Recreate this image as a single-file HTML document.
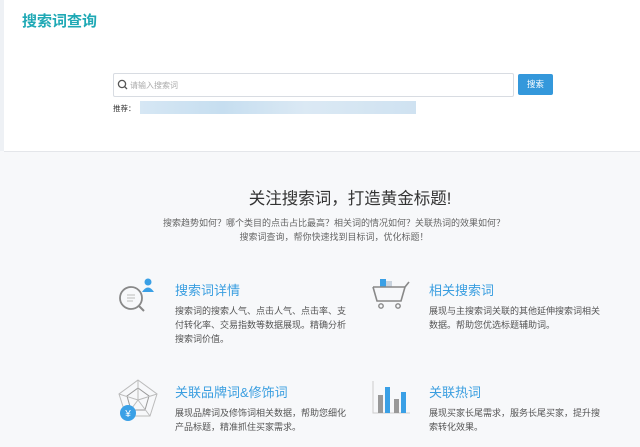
<!DOCTYPE html><html><head><meta charset="utf-8"><style>
body{margin:0;width:640px;height:447px;overflow:hidden;background:#f7f8fa;font-family:"Liberation Sans","Noto Sans CJK SC",sans-serif;position:relative}
.a{position:absolute;white-space:nowrap}
.top{position:absolute;left:4px;top:0;width:636px;height:151px;background:#fff;border-bottom:1px solid #e4e6ea}
.strip{position:absolute;left:0;top:0;width:4px;height:151px;background:#eef1f5}
.t{color:#3a9ee0;font-size:13px}
.d{color:#555;font-size:9px;line-height:14px;white-space:normal;width:172px}
</style></head><body>
<div class="strip"></div><div class="top"></div>
<div class="a" style="left:22px;top:10px;color:#1fa9b5;font-size:15px;font-weight:bold">搜索词查询</div>
<div class="a" style="left:113px;top:73px;width:399px;height:22px;border:1px solid #d8dce2;background:#fff;border-radius:2px"></div>
<svg class="a" style="left:117px;top:79px" width="11" height="11"><circle cx="5" cy="5" r="3.6" fill="none" stroke="#555" stroke-width="1.3"/><line x1="7.6" y1="7.6" x2="10" y2="10" stroke="#555" stroke-width="1.3"/></svg>
<div class="a" style="left:130px;top:80px;font-size:8px;color:#aaa">请输入搜索词</div>
<div class="a" style="left:518px;top:74px;width:35px;height:21px;background:#3498db;border-radius:2px;color:#fff;font-size:8.5px;text-align:center;line-height:21px">搜索</div>
<div class="a" style="left:113px;top:103px;font-size:7.5px;color:#333">推荐：</div>
<div class="a" style="left:140px;top:101px;width:276px;height:13px;background:linear-gradient(90deg,#d6e7f4,#c6def0 30%,#dbe9f4 60%,#cfe2f1);"></div>
<div class="a" style="left:30px;width:640px;top:185px;text-align:center;font-size:16.5px;color:#333">关注搜索词，打造黄金标题!</div>
<div class="a" style="left:14px;width:640px;top:216px;text-align:center;font-size:9px;color:#666">搜索趋势如何？哪个类目的点击占比最高？相关词的情况如何？关联热词的效果如何？</div>
<div class="a" style="left:14px;width:640px;top:230px;text-align:center;font-size:9px;color:#666">搜索词查询，帮你快速找到目标词，优化标题！</div>

<svg class="a" style="left:116px;top:276px" width="42" height="40"><circle cx="15" cy="22" r="11" fill="none" stroke="#888" stroke-width="1.8"/><line x1="23" y1="30" x2="28" y2="35" stroke="#888" stroke-width="2"/><line x1="11" y1="19" x2="19" y2="19" stroke="#bbb"/><line x1="11" y1="22" x2="19" y2="22" stroke="#bbb"/><line x1="11" y1="25" x2="17" y2="25" stroke="#bbb"/><circle cx="32" cy="6" r="3.5" fill="#3aa0e6"/><path d="M26 16 q6-9 12 0 z" fill="#3aa0e6"/></svg>
<div class="a t" style="left:175px;top:280px">搜索词详情</div>
<div class="a d" style="left:175px;top:304px">搜索词的搜索人气、点击人气、点击率、支付转化率、交易指数等数据展现。精确分析搜索词价值。</div>

<svg class="a" style="left:372px;top:278px" width="40" height="36"><rect x="8" y="1" width="6" height="8" fill="#3aa0e6"/><rect x="14" y="3" width="6" height="6" fill="#c9d3de"/><path d="M1 9 h32 l4-5 M1 9 l4 14 h24 l4-14" fill="none" stroke="#888" stroke-width="1.6"/><circle cx="9" cy="28" r="2.2" fill="none" stroke="#888" stroke-width="1.4"/><circle cx="26" cy="28" r="2.2" fill="none" stroke="#888" stroke-width="1.4"/></svg>
<div class="a t" style="left:429px;top:280px">相关搜索词</div>
<div class="a d" style="left:429px;top:304px">展现与主搜索词关联的其他延伸搜索词相关数据。帮助您优选标题辅助词。</div>

<svg class="a" style="left:116px;top:378px" width="44" height="44"><polygon points="22,2 41,16 34,38 10,38 3,16" fill="none" stroke="#bbb"/><polygon points="22,10 33,18 29,32 15,32 11,18" fill="none" stroke="#999"/><path d="M22 2 L22 22 M41 16 L22 22 M34 38 L22 22 M10 38 L22 22 M3 16 L22 22" stroke="#bbb"/><circle cx="12" cy="35" r="8" fill="#3aa0e6"/><text x="12" y="39" font-size="10" fill="#fff" text-anchor="middle">¥</text></svg>
<div class="a t" style="left:175px;top:382px">关联品牌词&amp;修饰词</div>
<div class="a d" style="left:175px;top:406px">展现品牌词及修饰词相关数据，帮助您细化产品标题，精准抓住买家需求。</div>

<svg class="a" style="left:372px;top:380px" width="40" height="36"><path d="M1 1 V33 H38" fill="none" stroke="#ccc"/><rect x="6" y="15" width="5" height="18" fill="#999"/><rect x="13" y="7" width="5" height="26" fill="#3aa0e6"/><rect x="22" y="19" width="5" height="14" fill="#999"/><rect x="29" y="12" width="5" height="21" fill="#3aa0e6"/></svg>
<div class="a t" style="left:429px;top:382px">关联热词</div>
<div class="a d" style="left:429px;top:406px">展现买家长尾需求，服务长尾买家，提升搜索转化效果。</div>
</body></html>
